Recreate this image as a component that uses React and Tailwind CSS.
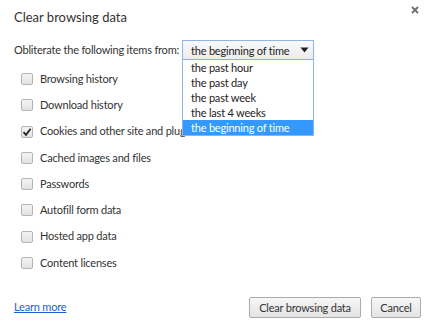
import React from 'react';

const items = [
  { label: 'Browsing history', checked: false },
  { label: 'Download history', checked: false },
  { label: 'Cookies and other site and plugin data', checked: true },
  { label: 'Cached images and files', checked: false },
  { label: 'Passwords', checked: false },
  { label: 'Autofill form data', checked: false },
  { label: 'Hosted app data', checked: false },
  { label: 'Content licenses', checked: false },
];

const periods = ['the past hour', 'the past day', 'the past week', 'the last 4 weeks', 'the beginning of time'];

const Checkbox = ({ checked }) => (
  <span className="w-[12px] h-[12px] shrink-0 rounded-[2px] border border-[#b4b4b4] bg-gradient-to-b from-[#f4f4f4] to-[#e2e2e2] flex items-center justify-center">
    {checked && (
      <svg width="10" height="10" viewBox="0 0 10 10">
        <path d="M1.5 5.2 L4 7.8 L8.6 1.8" fill="none" stroke="#222" strokeWidth="1.8" />
      </svg>
    )}
  </span>
);

const btn =
  'h-[21px] rounded-[2px] border border-[#acacac] bg-gradient-to-b from-[#f6f6f6] to-[#e4e4e4] text-[#333] leading-none whitespace-nowrap flex items-center justify-center';

export default function App() {
  return (
    <div className="w-[434px] h-[325px] bg-white text-[#333] text-[11px] tracking-[-0.2px] font-['Lato','Noto_Sans',sans-serif] whitespace-nowrap flex flex-col px-[14px] pr-[13px]">
      {/* header */}
      <div className="h-[40px] flex items-start justify-between">
        <h1 className="mt-[7px] text-[13px] tracking-normal leading-[20px] text-[#333]">Clear browsing data</h1>
        <svg className="mt-[6px] mr-[2px]" width="8" height="8" viewBox="0 0 8 8">
          <path d="M1 1 L7 7 M7 1 L1 7" stroke="#6e6e6e" strokeWidth="1.8" />
        </svg>
      </div>

      {/* period row */}
      <div className="h-[20px] flex items-center">
        <span className="w-[168px] leading-[20px]">Obliterate the following items from:</span>
        <div className="relative">
          <div className="w-[132px] h-[20px] border border-[#8fb3e6] bg-gradient-to-b from-[#fafafa] to-[#ececec] flex items-center justify-between pl-[8px] pr-[4px]">
            <span className="leading-none text-[#222]">the beginning of time</span>
            <svg width="9" height="6" viewBox="0 0 9 6">
              <path d="M0.5 0.5 H8.5 L4.5 5.5 Z" fill="#222" />
            </svg>
          </div>
          <ul className="absolute left-0 top-[20px] w-[132px] border border-[#8fb3e6] border-t-0 bg-white z-10">
            {periods.map((p, i) => (
              <li
                key={p}
                className={`h-[15px] pl-[8px] leading-[15px] ${i === periods.length - 1 ? 'bg-[#3399ff] text-white' : 'text-[#222]'}`}
              >
                {p}
              </li>
            ))}
          </ul>
        </div>
      </div>

      {/* checkboxes */}
      <div className="mt-[6px] flex flex-col">
        {items.map((it) => (
          <label key={it.label} className="h-[26.25px] flex items-center pl-[7px] gap-[7px]">
            <Checkbox checked={it.checked} />
            <span>{it.label}</span>
          </label>
        ))}
      </div>

      {/* footer */}
      <div className="mt-[21px] flex items-center justify-between">
        <a className="text-[#1a5fd1] underline">Learn more</a>
        <div className="flex gap-[10px]">
          <button className={`${btn} w-[112px]`}>Clear browsing data</button>
          <button className={`${btn} w-[50px]`}>Cancel</button>
        </div>
      </div>
    </div>
  );
}
